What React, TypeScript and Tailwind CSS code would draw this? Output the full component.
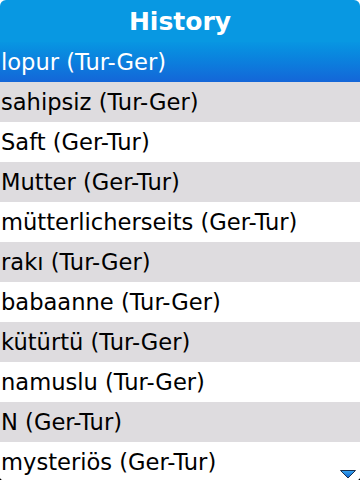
import React from "react";

const items = [
  "sahipsiz (Tur-Ger)",
  "Saft (Ger-Tur)",
  "Mutter (Ger-Tur)",
  "mütterlicherseits (Ger-Tur)",
  "rakı (Tur-Ger)",
  "babaanne (Tur-Ger)",
  "kütürtü (Tur-Ger)",
  "namuslu (Tur-Ger)",
  "N (Ger-Tur)",
  "mysteriös (Ger-Tur)",
];

export default function App() {
  return (
    <div className="w-[360px] h-[480px] overflow-hidden bg-black relative font-['DejaVu_Sans','Liberation_Sans',sans-serif]">
      <div className="bg-white w-full h-full rounded-b-[4px] overflow-hidden">
        <div className="w-full h-full rounded-t-[6px] overflow-hidden bg-white flex flex-col">
          <div className="h-[42px] shrink-0 bg-[#0898e2] flex items-center justify-center">
            <span className="text-white font-bold text-[25px] leading-none">History</span>
          </div>
          <div className="h-[40px] shrink-0 bg-gradient-to-b from-[#0896e2] to-[#1466d8] flex items-center pl-[1px]">
            <span className="text-white text-[22.6px] leading-none">lopur (Tur-Ger)</span>
          </div>
          {items.map((t, i) => (
            <div
              key={t}
              className={`h-[40px] shrink-0 flex items-center pl-[1px] ${i % 2 === 0 ? "bg-[#dedcdf]" : "bg-white"}`}
            >
              <span className="text-black text-[22.6px] leading-none">{t}</span>
            </div>
          ))}
        </div>
      </div>
      <svg className="absolute left-[340px] top-[470px]" width="16" height="9" viewBox="0 0 16 9">
        <defs>
          <linearGradient id="ag" x1="0" y1="0" x2="0" y2="1">
            <stop offset="0" stopColor="#3aa8f0" />
            <stop offset="1" stopColor="#0a5fd0" />
          </linearGradient>
        </defs>
        <polygon points="0.5,0.5 15.5,0.5 8,8" fill="url(#ag)" stroke="#1a3050" strokeWidth="1" />
      </svg>
    </div>
  );
}
